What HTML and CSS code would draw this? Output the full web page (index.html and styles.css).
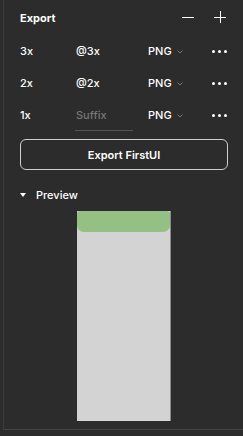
FILE: index.html
```html
<!DOCTYPE html>
<html>
<head>
<meta charset="utf-8">
<link rel="stylesheet" href="styles.css">
</head>
<body>
<div class="panel">
  <div class="header">
    <span class="title">Export</span>
    <div class="actions">
      <svg class="icon" width="12" height="12" viewBox="0 0 12 12"><path d="M0 6.5H12" stroke="#fff" stroke-width="1"/></svg>
      <svg class="icon" width="12" height="12" viewBox="0 0 12 12"><path d="M0 6.5H12M6.5 0V12" stroke="#fff" stroke-width="1"/></svg>
    </div>
  </div>
  <div class="row">
    <span class="scale">3x</span>
    <span class="suffix">@3x</span>
    <span class="format">PNG <svg class="chev" width="6" height="4" viewBox="0 0 6 4"><path d="M0.5 0.5L3 3L5.5 0.5" fill="none" stroke="#777" stroke-width="1"/></svg></span>
    <span class="more"><i></i><i></i><i></i></span>
  </div>
  <div class="row">
    <span class="scale">2x</span>
    <span class="suffix">@2x</span>
    <span class="format">PNG <svg class="chev" width="6" height="4" viewBox="0 0 6 4"><path d="M0.5 0.5L3 3L5.5 0.5" fill="none" stroke="#777" stroke-width="1"/></svg></span>
    <span class="more"><i></i><i></i><i></i></span>
  </div>
  <div class="row">
    <span class="scale">1x</span>
    <span class="suffix placeholder">Suffix</span>
    <span class="format">PNG <svg class="chev" width="6" height="4" viewBox="0 0 6 4"><path d="M0.5 0.5L3 3L5.5 0.5" fill="none" stroke="#777" stroke-width="1"/></svg></span>
    <span class="more"><i></i><i></i><i></i></span>
  </div>
  <button class="export-btn">Export FirstUI</button>
  <div class="preview-head">
    <svg class="tri" width="6" height="4" viewBox="0 0 6 4"><path d="M0 0H6L3 4Z" fill="#fff"/></svg>
    <span>Preview</span>
  </div>
  <div class="preview">
    <div class="frame"><div class="bar"></div></div>
  </div>
</div>
</body>
</html>
```

FILE: styles.css
```css
* { box-sizing: border-box; }
html, body { margin: 0; padding: 0; background: #2c2c2c; }
body {
  font-family: Inter, "Noto Sans", sans-serif;
  font-size: 11px;
  color: #fff;
  width: 243px;
  height: 436px;
  overflow: hidden;
}
.panel {
  margin-left: 3px;
  border-left: 1px solid #3b3b3b;
  border-bottom: 1px solid #444;
  height: 430px;
  padding-left: 16px;
  padding-right: 17px;
}
.header {
  height: 35px;
  display: flex;
  align-items: center;
  justify-content: space-between;
}
.title { font-weight: 700; }
.actions { display: flex; gap: 20px; margin-top: -1px; }
.icon { display: block; }
.row {
  height: 32px;
  display: grid;
  grid-template-columns: 56px 72px 64px 1fr;
  align-items: center;
  font-weight: 500;
}
.suffix { position: relative; }
.placeholder { color: #777; }
.placeholder::after {
  content: "";
  position: absolute;
  left: -1px;
  width: 58px;
  top: 22px;
  height: 1px;
  background: #555;
}
.format { display: flex; align-items: center; gap: 5px; }
.chev { display: block; margin-top: 1px; }
.more {
  display: flex;
  gap: 3px;
  justify-content: flex-end;
  padding-right: 1px;
}
.more i {
  width: 3px;
  height: 3px;
  border-radius: 50%;
  background: #fff;
  display: block;
}
.export-btn {
  margin-top: 8px;
  width: 208px;
  height: 31px;
  display: block;
  background: transparent;
  border: 1px solid #cfcfcf;
  border-radius: 6px;
  color: #fff;
  font-family: inherit;
  font-size: 11px;
  font-weight: 600;
  padding: 0;
}
.preview-head {
  height: 41px;
  display: flex;
  align-items: center;
  padding-top: 9px;
  gap: 10px;
  font-weight: 500;
}
.tri { display: block; margin-left: 0; }
.preview {
  display: flex;
  padding-left: 57px;
}
.frame {
  width: 94px;
  height: 210px;
  background: #d3d3d3;
  border-right: 1px solid #8a8a8a;
}
.bar {
  height: 21px;
  background: #94c084;
  border-radius: 3px 3px 7px 7px;
}
```
